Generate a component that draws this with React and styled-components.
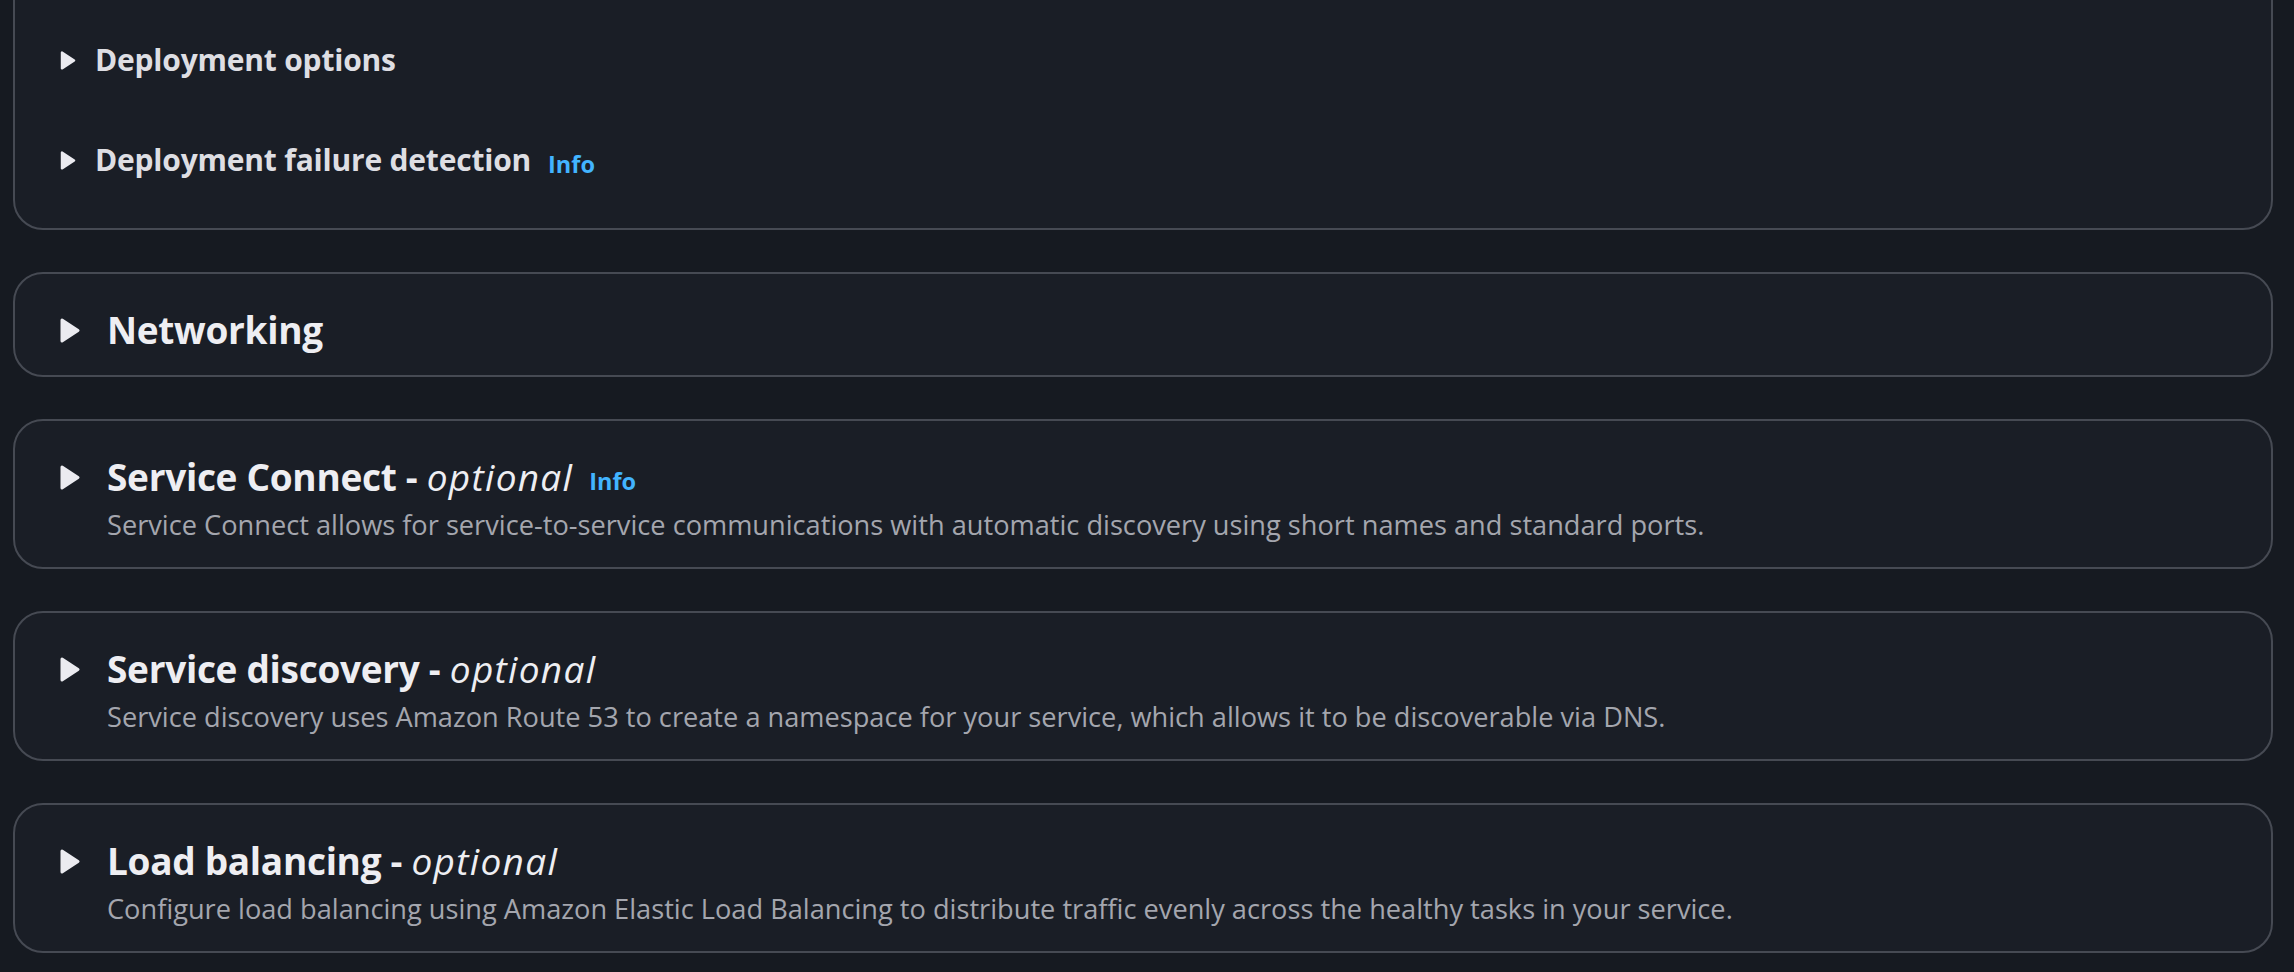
import React from 'react';
import styled, { createGlobalStyle } from 'styled-components';

const GlobalStyle = createGlobalStyle`
    html, body {
        margin: 0;
        padding: 0;
        background: #161a21;
    }
    body {
        font-family: "Open Sans", "Noto Sans", "DejaVu Sans", sans-serif;
        color: #ebebf0;
    }
`;

const sections = [
    { title: 'Networking' },
    {
        title: 'Service Connect',
        optional: true,
        info: true,
        text: 'Service Connect allows for service-to-service communications with automatic discovery using short names and standard ports.',
    },
    {
        title: 'Service discovery',
        optional: true,
        text: 'Service discovery uses Amazon Route 53 to create a namespace for your service, which allows it to be discoverable via DNS.',
    },
    {
        title: 'Load balancing',
        optional: true,
        text: 'Configure load balancing using Amazon Elastic Load Balancing to distribute traffic evenly across the healthy tasks in your service.',
    },
];

const Caret = ({ small }) => (
    <CaretBox $small={small}>
        <svg viewBox="0 0 20 25" width="100%" height="100%">
            <polygon
                points="2,2 2,23 18,12.5"
                fill="#ebebf0"
                stroke="#ebebf0"
                strokeWidth="3"
                strokeLinejoin="round"
            />
        </svg>
    </CaretBox>
);

function App() {
    return (
        <>
            <GlobalStyle />
            <Page>
                <GroupCard>
                    <SubRow>
                        <Caret small />
                        <SubTitle>Deployment options</SubTitle>
                    </SubRow>
                    <SubRow>
                        <Caret small />
                        <SubTitle>Deployment failure detection</SubTitle>
                        <InfoLink $sub>Info</InfoLink>
                    </SubRow>
                </GroupCard>

                {sections.map((s) => (
                    <Card key={s.title}>
                        <HeaderRow>
                            <Caret />
                            <Title>
                                {s.title}
                                {s.optional && (
                                    <>
                                        {' - '}
                                        <Optional>optional</Optional>
                                    </>
                                )}
                            </Title>
                            {s.info && <InfoLink>Info</InfoLink>}
                        </HeaderRow>
                        {s.text && <Description>{s.text}</Description>}
                    </Card>
                ))}
            </Page>
        </>
    );
}

export default App;

//Page
const Page = styled.div`
    height: 972px;
    overflow: hidden;
    box-sizing: border-box;
    padding: 0 21px 0 13px;
    display: flex;
    flex-direction: column;
    gap: 42px;
`;

//Cards
const Card = styled.section`
    background: #1a1e26;
    border: 2px solid #464a53;
    border-radius: 30px;
    padding: 35px 44px 24px 45px;
`;

const GroupCard = styled(Card)`
    margin-top: -60px;
    padding-top: 93px;
    padding-bottom: 43px;
    display: flex;
    flex-direction: column;
    gap: 50px;
    border-top-left-radius: 0;
    border-top-right-radius: 0;
`;

//Rows
const HeaderRow = styled.div`
    display: flex;
    align-items: center;
    height: 42px;
`;

const SubRow = styled.div`
    display: flex;
    align-items: center;
    height: 50px;
`;

const CaretBox = styled.span`
    display: inline-flex;
    flex: none;
    width: ${(p) => (p.$small ? '16px' : '20px')};
    height: ${(p) => (p.$small ? '19px' : '25px')};
    margin-right: ${(p) => (p.$small ? '19px' : '27px')};
`;

//Text
const Title = styled.h2`
    margin: 0;
    font-size: 37px;
    line-height: 42px;
    font-weight: 700;
    color: #eeeef2;
    letter-spacing: -0.3px;
    white-space: nowrap;
`;

const Optional = styled.i`
    font-style: italic;
    font-weight: 500;
    letter-spacing: 1.3px;
`;

const SubTitle = styled.span`
    font-size: 30px;
    line-height: 36px;
    font-weight: 700;
    color: #dedee3;
    letter-spacing: -0.2px;
`;

const InfoLink = styled.a`
    font-size: 23.5px;
    font-weight: 700;
    color: #42b4ff;
    margin-left: ${(p) => (p.$sub ? '17px' : '16px')};
    margin-top: 8px;
    cursor: pointer;
`;

const Description = styled.p`
    margin: 9px 0 0 47px;
    font-size: 27.2px;
    line-height: 36px;
    color: #a4a6ae;
`;
